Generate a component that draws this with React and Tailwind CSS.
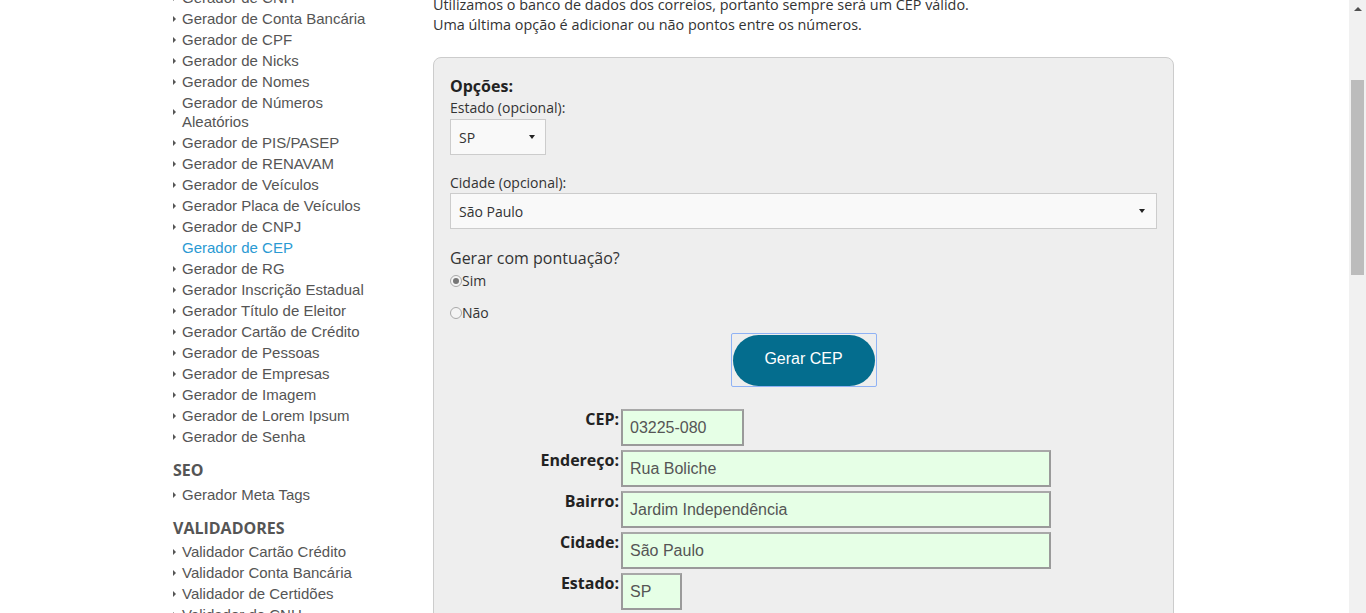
const GERADORES = [
  "Gerador de CNH",
  "Gerador de Conta Bancária",
  "Gerador de CPF",
  "Gerador de Nicks",
  "Gerador de Nomes",
  "Gerador de Números Aleatórios",
  "Gerador de PIS/PASEP",
  "Gerador de RENAVAM",
  "Gerador de Veículos",
  "Gerador Placa de Veículos",
  "Gerador de CNPJ",
  "Gerador de CEP",
  "Gerador de RG",
  "Gerador Inscrição Estadual",
  "Gerador Título de Eleitor",
  "Gerador Cartão de Crédito",
  "Gerador de Pessoas",
  "Gerador de Empresas",
  "Gerador de Imagem",
  "Gerador de Lorem Ipsum",
  "Gerador de Senha",
];

const VALIDADORES = [
  "Validador Cartão Crédito",
  "Validador Conta Bancária",
  "Validador de Certidões",
  "Validador de CNH",
];

const RESULT = [
  { label: "CEP:", value: "03225-080", w: "w-[123px]" },
  { label: "Endereço:", value: "Rua Boliche", w: "w-[430px]" },
  { label: "Bairro:", value: "Jardim Independência", w: "w-[430px]" },
  { label: "Cidade:", value: "São Paulo", w: "w-[430px]" },
  { label: "Estado:", value: "SP", w: "w-[61px]" },
];

function NavItem({ text, active }) {
  return (
    <li className="flex items-center mb-[2px] leading-[19px]">
      <span className="w-[9px] shrink-0">
        {!active && (
          <span className="block w-0 h-0 border-y-[3px] border-y-transparent border-l-[3px] border-l-[#555]" />
        )}
      </span>
      <a className={active ? "text-[#2b9ad3]" : "text-[#555]"}>{text}</a>
    </li>
  );
}

function Caret() {
  return <span className="w-0 h-0 border-x-[3.5px] border-x-transparent border-t-[4px] border-t-[#222]" />;
}

function Radio({ checked, label }) {
  return (
    <label className="flex items-center leading-[20px] text-[#333]">
      <span className="w-[12px] h-[12px] rounded-full border border-[#a9a9a9] bg-[#f4f4f4] flex items-center justify-center">
        {checked && <span className="w-[6px] h-[6px] rounded-full bg-[#767676]" />}
      </span>
      {label}
    </label>
  );
}

export default function App() {
  return (
    <div className="flex h-[613px] overflow-hidden bg-white">
      <div className="flex-1 flex pl-[173px]">
        {/* sidebar */}
        <aside className="w-[260px] shrink-0 font-['Liberation_Sans',Arial,sans-serif] text-[15px]">
          <ul className="mt-[-12px] w-[205px]">
            {GERADORES.map((g) => (
              <NavItem key={g} text={g} active={g === "Gerador de CEP"} />
            ))}
          </ul>
          <h3 className="mt-[13px] font-['Open_Sans',sans-serif] font-bold text-[16px] leading-[22px] text-[#555]">SEO</h3>
          <ul className="mt-[4px]">
            <NavItem text="Gerador Meta Tags" />
          </ul>
          <h3 className="mt-[13px] font-['Open_Sans',sans-serif] font-bold text-[16px] leading-[22px] text-[#555]">VALIDADORES</h3>
          <ul className="mt-[3px]">
            {VALIDADORES.map((v) => (
              <NavItem key={v} text={v} />
            ))}
          </ul>
        </aside>

        {/* main */}
        <main className="w-[741px] shrink-0 font-['Open_Sans',sans-serif] text-[14px] text-[#333]">
          <p className="mt-[-5px] leading-[20px] text-[14.4px]">
            Utilizamos o banco de dados dos correios, portanto sempre será um CEP válido.
            <br />
            Uma última opção é adicionar ou não pontos entre os números.
          </p>

          <section className="mt-[22px] bg-[#eeeeee] border border-[#cccccc] rounded-[8px] px-[16px] pt-[16px] pb-[40px]">
            <h4 className="font-bold text-[16px] leading-[24px] text-[#222]">Opções:</h4>
            <div className="leading-[20px]">Estado (opcional):</div>
            <div className="mt-[1px] w-[96px] h-[36px] bg-[#f9f9f9] border border-[#cccccc] flex items-center justify-between pl-[8px] pr-[10px]">
              <span>SP</span>
              <Caret />
            </div>

            <div className="mt-[18px] leading-[20px]">Cidade (opcional):</div>
            <div className="h-[36px] bg-[#f9f9f9] border border-[#cccccc] flex items-center justify-between pl-[8px] pr-[11px]">
              <span>São Paulo</span>
              <Caret />
            </div>

            <div className="mt-[17px] text-[16px] leading-[24px]">Gerar com pontuação?</div>
            <div className="pt-[1px]">
              <Radio checked label="Sim" />
            </div>
            <div className="mt-[12px]">
              <Radio label="Não" />
            </div>

            <div className="mt-[10px] flex justify-center">
              <span className="border border-[#8fb2f5] rounded-[2px] p-[1px] pb-0">
                <button className="w-[142px] h-[51px] pb-[3px] rounded-full bg-[#046d8e] text-white font-['Liberation_Sans',Arial,sans-serif] text-[16px]">
                  Gerar CEP
                </button>
              </span>
            </div>

            <div className="mt-[22px] flex flex-col gap-[4px]">
              {RESULT.map((r) => (
                <div key={r.label} className="flex items-start">
                  <label className="w-[171px] pr-[2px] text-right font-bold text-[16px] leading-[22px] text-[#222] -mt-px">
                    {r.label}
                  </label>
                  <div
                    className={`${r.w} h-[37px] bg-[#e6ffe6] border-2 border-[#9a9a9a] border-t-[#a8a8a8] flex items-center px-[7px] font-['Liberation_Sans',Arial,sans-serif] text-[16px] text-[#555]`}
                  >
                    {r.value}
                  </div>
                </div>
              ))}
            </div>
          </section>
        </main>
      </div>

      {/* scrollbar */}
      <div className="w-[17px] shrink-0 bg-[#f1f1f1] flex flex-col items-center">
        <span className="mt-[7px] w-0 h-0 border-x-[4px] border-x-transparent border-b-[4px] border-b-[#505050]" />
        <span className="mt-[69px] w-[13px] h-[195px] bg-[#bcbcbc]" />
      </div>
    </div>
  );
}
